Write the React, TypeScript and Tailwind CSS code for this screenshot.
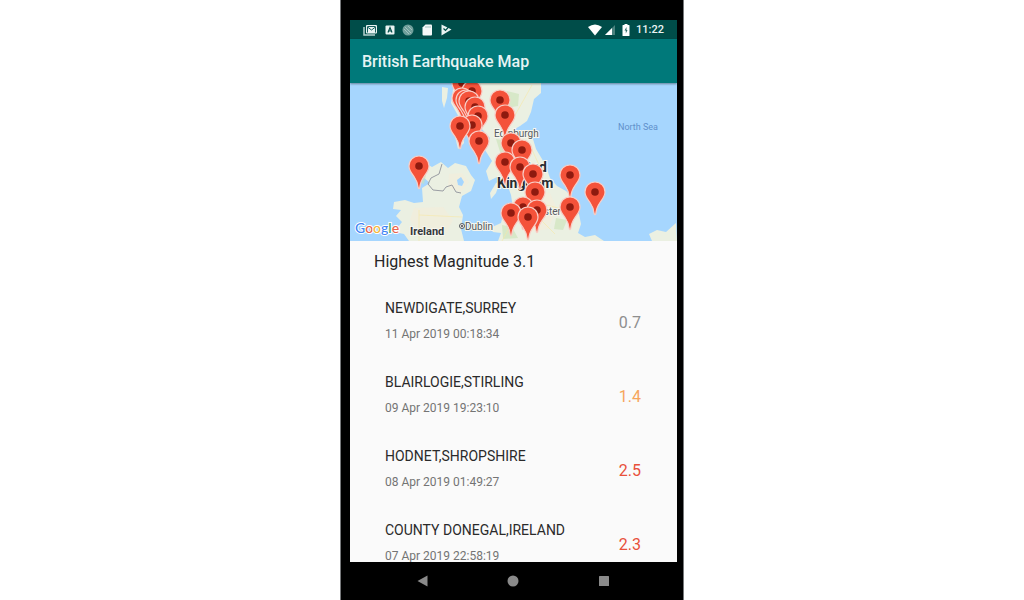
type Quake = {
  place: string;
  time: string;
  magnitude: string;
  tone: string;
};

const quakes: Quake[] = [
  { place: "NEWDIGATE,SURREY", time: "11 Apr 2019 00:18:34", magnitude: "0.7", tone: "text-[#8e8e8e]" },
  { place: "BLAIRLOGIE,STIRLING", time: "09 Apr 2019 19:23:10", magnitude: "1.4", tone: "text-[#f6a55c]" },
  { place: "HODNET,SHROPSHIRE", time: "08 Apr 2019 01:49:27", magnitude: "2.5", tone: "text-[#e8503a]" },
  { place: "COUNTY DONEGAL,IRELAND", time: "07 Apr 2019 22:58:19", magnitude: "2.3", tone: "text-[#e8503a]" },
];

// Centre of each pin head, ordered from back to front.
const pins: [number, number][] = [
  [112, 0], [122, 8], [112, 15], [116, 17], [119, 18], [125, 24], [150, 17], [128, 33],
  [155, 32], [122, 42], [110, 43], [129, 58], [161, 60], [172, 67], [155, 79], [170, 84],
  [69, 83], [183, 91], [220, 92], [185, 109], [245, 109], [173, 124], [220, 124],
  [187, 127], [161, 130], [178, 134],
];

function Pin({ x, y }: { x: number; y: number }) {
  return (
    <g transform={`translate(${x} ${y})`}>
      <path
        d="M0-10C-5.700-10-10-5.700-10 0C-10 4.500-7.500 7-5 10.500C-2.500 14-1.200 17-.7 22Q0 23.500 .7 22C1.200 17 2.500 14 5 10.500C7.500 7 10 4.500 10 0C10-5.700 5.700-10 0-10Z"
        fill="#f4523a"
        stroke="#f8cfc8"
        strokeWidth="1.200"
      />
      <circle r="3.800" fill="#8e1a0f" />
    </g>
  );
}

function QuakeMap() {
  return (
    <svg
      viewBox="0 0 327 158"
      preserveAspectRatio="xMidYMid slice"
      className="block h-[158px] w-full shrink-0 bg-[#a6d6fe] font-['Roboto',sans-serif]"
      role="img"
      aria-label="Map of recent British earthquakes"
    >
      <g fill="#ebf0e2">
        <path d="M104 0H191L191 10L184 16L181 29L177 38L170 43L163 47L176 49L183 56L186 66L192 76L197 86L200 95L207 103L216 108L222 114L219 124L229 131L231 141L228 150L235 154L245 152L254 158H148L151 150L143 149L140 145L151 140L153 132L163 125L161 112L156 98L147 94L139 98L136 88L142 78L135 67L140 55L131 45L128 61L122 65L120 50L112 46L114 60L108 66L104 49L110 36L101 20Z" />
        <path d="M92 4L98 5L97 15L94 25L92 18Z" />
        <path d="M146 100L150 98L146 110L141 116L140 110Z" />
        <path d="M326 140L327 158H302L299 151L307 147L316 149Z" />
        <path d="M73 79L82 84L91 79L98 85L105 80L116 83L121 92L125 97L121 108L112 113L109 124L113 132L111 146L114 158H59L54 151L44 149L52 139L46 133L51 127L43 126L44 119L55 117L64 120L73 119L72 105L80 100L73 94L76 88Z" />
      </g>
      <g fill="#f3eddb">
        <path d="M99 91L112 90L119 99L111 109L98 105ZM64 125L93 124L103 137L95 152L68 149L60 137Z" opacity=".6" />
        <path d="M178 105L200 110L207 126L198 146L174 150Z" opacity=".7" />
      </g>
      <g fill="#c9e3b8" opacity=".6">
        <path d="M157 8L169 11L168 23L156 25L152 17ZM146 56L158 58L162 68L151 72ZM173 100L184 103L187 119L179 117ZM152 142L162 144L168 155L153 156ZM206 135L217 137L213 147L204 146ZM61 90L76 92L74 101L67 98Z" />
      </g>
      <path d="M107 97L111 94L114 99L112 103L108 102Z" fill="#a6d6fe" />
      <path d="M152 158L166 132L180 126L205 151M179 60L189 82L188 120L220 128M69 127L69 158M69 132L112 134M182 2L159 43" fill="none" stroke="#f7e7a7" strokeWidth="1" opacity=".6" />
      <path d="M92 81L89 91L81 95L78 101L83 107L93 108L96 104L102 102L106 109L111 110" fill="none" stroke="#9a9da3" strokeWidth="1" />
      <g stroke="#f7f6ee" strokeWidth="2" paintOrder="stroke" fontSize="10">
        <text x="144" y="54" fill="#555a60">Edinburgh</text>
        <text x="211" y="132" textAnchor="end" fill="#555a60">Manchester</text>
        <text x="115" y="147" fill="#50565c">Dublin</text>
        <text x="60" y="152" fontSize="11" fontWeight="700" fill="#33373c">Ireland</text>
        <text x="197" y="89" textAnchor="end" fontSize="14" fontWeight="700" fill="#292c30">United</text>
        <text x="147" y="105" fontSize="14" fontWeight="700" fill="#292c30">Kingdom</text>
      </g>
      <text x="268" y="47" fontSize="9" fill="#6190cb">North Sea</text>
      <circle cx="112" cy="143" r="2.500" fill="#eee" stroke="#565b60" />
      <circle cx="112" cy="143" r="1" fill="#444" />
      {pins.map(([x, y]) => (
        <Pin key={`${x}-${y}`} x={x} y={y} />
      ))}
      <text x="5" y="150" fontSize="14" fontWeight="500" stroke="#fff" strokeWidth="2" paintOrder="stroke" className="font-['Lato',sans-serif]">
        <tspan fill="#4285f4">G</tspan>
        <tspan fill="#e7634e">o</tspan>
        <tspan fill="#f2b73c">o</tspan>
        <tspan fill="#4285f4">g</tspan>
        <tspan fill="#42a866">l</tspan>
        <tspan fill="#e7634e">e</tspan>
      </text>
    </svg>
  );
}

function StatusBar() {
  return (
    <div className="flex h-[19px] shrink-0 items-center justify-between bg-[#004d49] pr-[13px] pl-[13px] text-[#e9f3f2]">
      <div className="flex items-center gap-[7px]">
        <svg viewBox="0 0 15 12" className="h-3 w-[15px]" aria-hidden="true">
          <path d="M1 3V11H12" fill="none" stroke="#b4cfcd" strokeWidth="1.500" />
          <rect x="3" y="1" width="11" height="8.500" rx="1" fill="#e9f3f2" />
          <path d="M4.500 8.500V3L8.500 6L12.500 3V8.500M4.500 2.500H12.500" fill="none" stroke="#15605c" strokeWidth="1" />
        </svg>
        <svg viewBox="0 0 10 10" className="h-[10px] w-[10px]" aria-hidden="true">
          <rect x=".5" y=".5" width="9" height="9" rx="1" fill="#e9f3f2" />
          <path d="M3 7.500L5 2.500L7 7.500M3.800 6H6.200" fill="none" stroke="#004d49" strokeWidth="1.200" />
        </svg>
        <svg viewBox="0 0 12 12" className="h-3 w-3" aria-hidden="true">
          <circle cx="6" cy="6" r="5.500" fill="#6f9f9b" />
          <path d="M2 5L7 10M3 3L9 9M6 2L10 6" stroke="#a3c2bf" strokeWidth="1" />
        </svg>
        <svg viewBox="0 0 12 12" className="h-3 w-3" aria-hidden="true">
          <path d="M4.500 .5H10Q11 .5 11 1.500V10.500Q11 11.500 10 11.500H2.500Q1.500 11.500 1.500 10.500V3.500Z" fill="#f4f8f8" />
          <path d="M5 2V4M7 2V4M9 2V4" stroke="#8fb3b0" strokeWidth=".8" />
        </svg>
        <svg viewBox="0 0 12 12" className="h-3 w-3" aria-hidden="true">
          <path d="M1.500 .5L11.500 5.500L1.500 11.500Z" fill="#e9f3f2" />
          <path d="M3.500 4.500L5.500 6.500L9.500 2" fill="none" stroke="#004d49" strokeWidth="1.200" />
        </svg>
      </div>
      <div className="flex items-center">
        <svg viewBox="0 0 14 12" className="h-3 w-[14px]" aria-hidden="true">
          <path d="M0 3Q7-2 14 3L7 11.500Z" fill="#fff" />
        </svg>
        <svg viewBox="0 0 12 12" className="ml-[2px] h-3 w-3" aria-hidden="true">
          <path d="M11 1V11H1Z" fill="#4b817e" />
          <path d="M8 4V11H1Z" fill="#fff" />
        </svg>
        <svg viewBox="0 0 8 12" className="ml-[6px] h-3 w-2" aria-hidden="true">
          <path d="M2.500 0H5.500V1H7Q7.500 1 7.500 1.500V11.500Q7.500 12 7 12H1Q.5 12 .5 11.500V1.500Q.5 1 1 1H2.500Z" fill="#fff" />
          <path d="M4.500 3L2.500 6.500H3.800V9.500L5.500 6H4.500Z" fill="#2c6a67" />
        </svg>
        <span className="ml-[6px] text-[11px] font-medium leading-4">11:22</span>
      </div>
    </div>
  );
}

function QuakeRow({ quake }: { quake: Quake }) {
  return (
    <li className="flex h-[74px] shrink-0 items-center justify-between pr-9 pl-[35px]">
      <div className="flex flex-col gap-[6px] pb-1">
        <h3 className="text-[14px] leading-5 text-[#2a2a2a]">{quake.place}</h3>
        <p className="text-[12px] leading-5 text-[#747474]">{quake.time}</p>
      </div>
      <span className={`text-[16px] leading-5 ${quake.tone}`}>{quake.magnitude}</span>
    </li>
  );
}

export default function App() {
  return (
    <div className="h-screen bg-white font-['Roboto',sans-serif]">
      <div className="mx-auto flex h-full w-full max-w-[344px] flex-col border-x border-[#77797b] bg-black pt-5 pr-[6px] pl-[9px]">
        <StatusBar />
        <header className="z-10 flex h-11 shrink-0 items-center bg-[#00797a] px-3 pt-[2px] shadow-[0_1px_2px_rgba(0,0,0,0.4)]">
          <h1 className="text-[16px] font-medium leading-6 text-[#e6f4f4]">British Earthquake Map</h1>
        </header>
        <QuakeMap />
        <main className="flex min-h-0 flex-1 flex-col overflow-hidden bg-[#fafafa]">
          <h2 className="h-[45px] shrink-0 px-6 pt-[9px] text-[16px] leading-6 text-[#262626]">Highest Magnitude 3.1</h2>
          <ul className="flex flex-col">
            {quakes.map((quake) => (
              <QuakeRow key={quake.time} quake={quake} />
            ))}
          </ul>
        </main>
        <nav className="flex h-[38px] shrink-0 items-center justify-between px-[67px]">
          <button type="button" aria-label="Back">
            <svg viewBox="0 0 11 12" className="block h-3 w-[11px]">
              <path d="M10.500 .5V11.500L.5 6Z" fill="#8a8a8a" />
            </svg>
          </button>
          <button type="button" aria-label="Home">
            <svg viewBox="0 0 12 12" className="block h-3 w-3">
              <circle cx="6" cy="6" r="5.500" fill="#8a8a8a" />
            </svg>
          </button>
          <button type="button" aria-label="Recent apps">
            <svg viewBox="0 0 12 12" className="block h-3 w-3">
              <rect x="1" y="1" width="10" height="10" rx=".5" fill="#8a8a8a" />
            </svg>
          </button>
        </nav>
      </div>
    </div>
  );
}
